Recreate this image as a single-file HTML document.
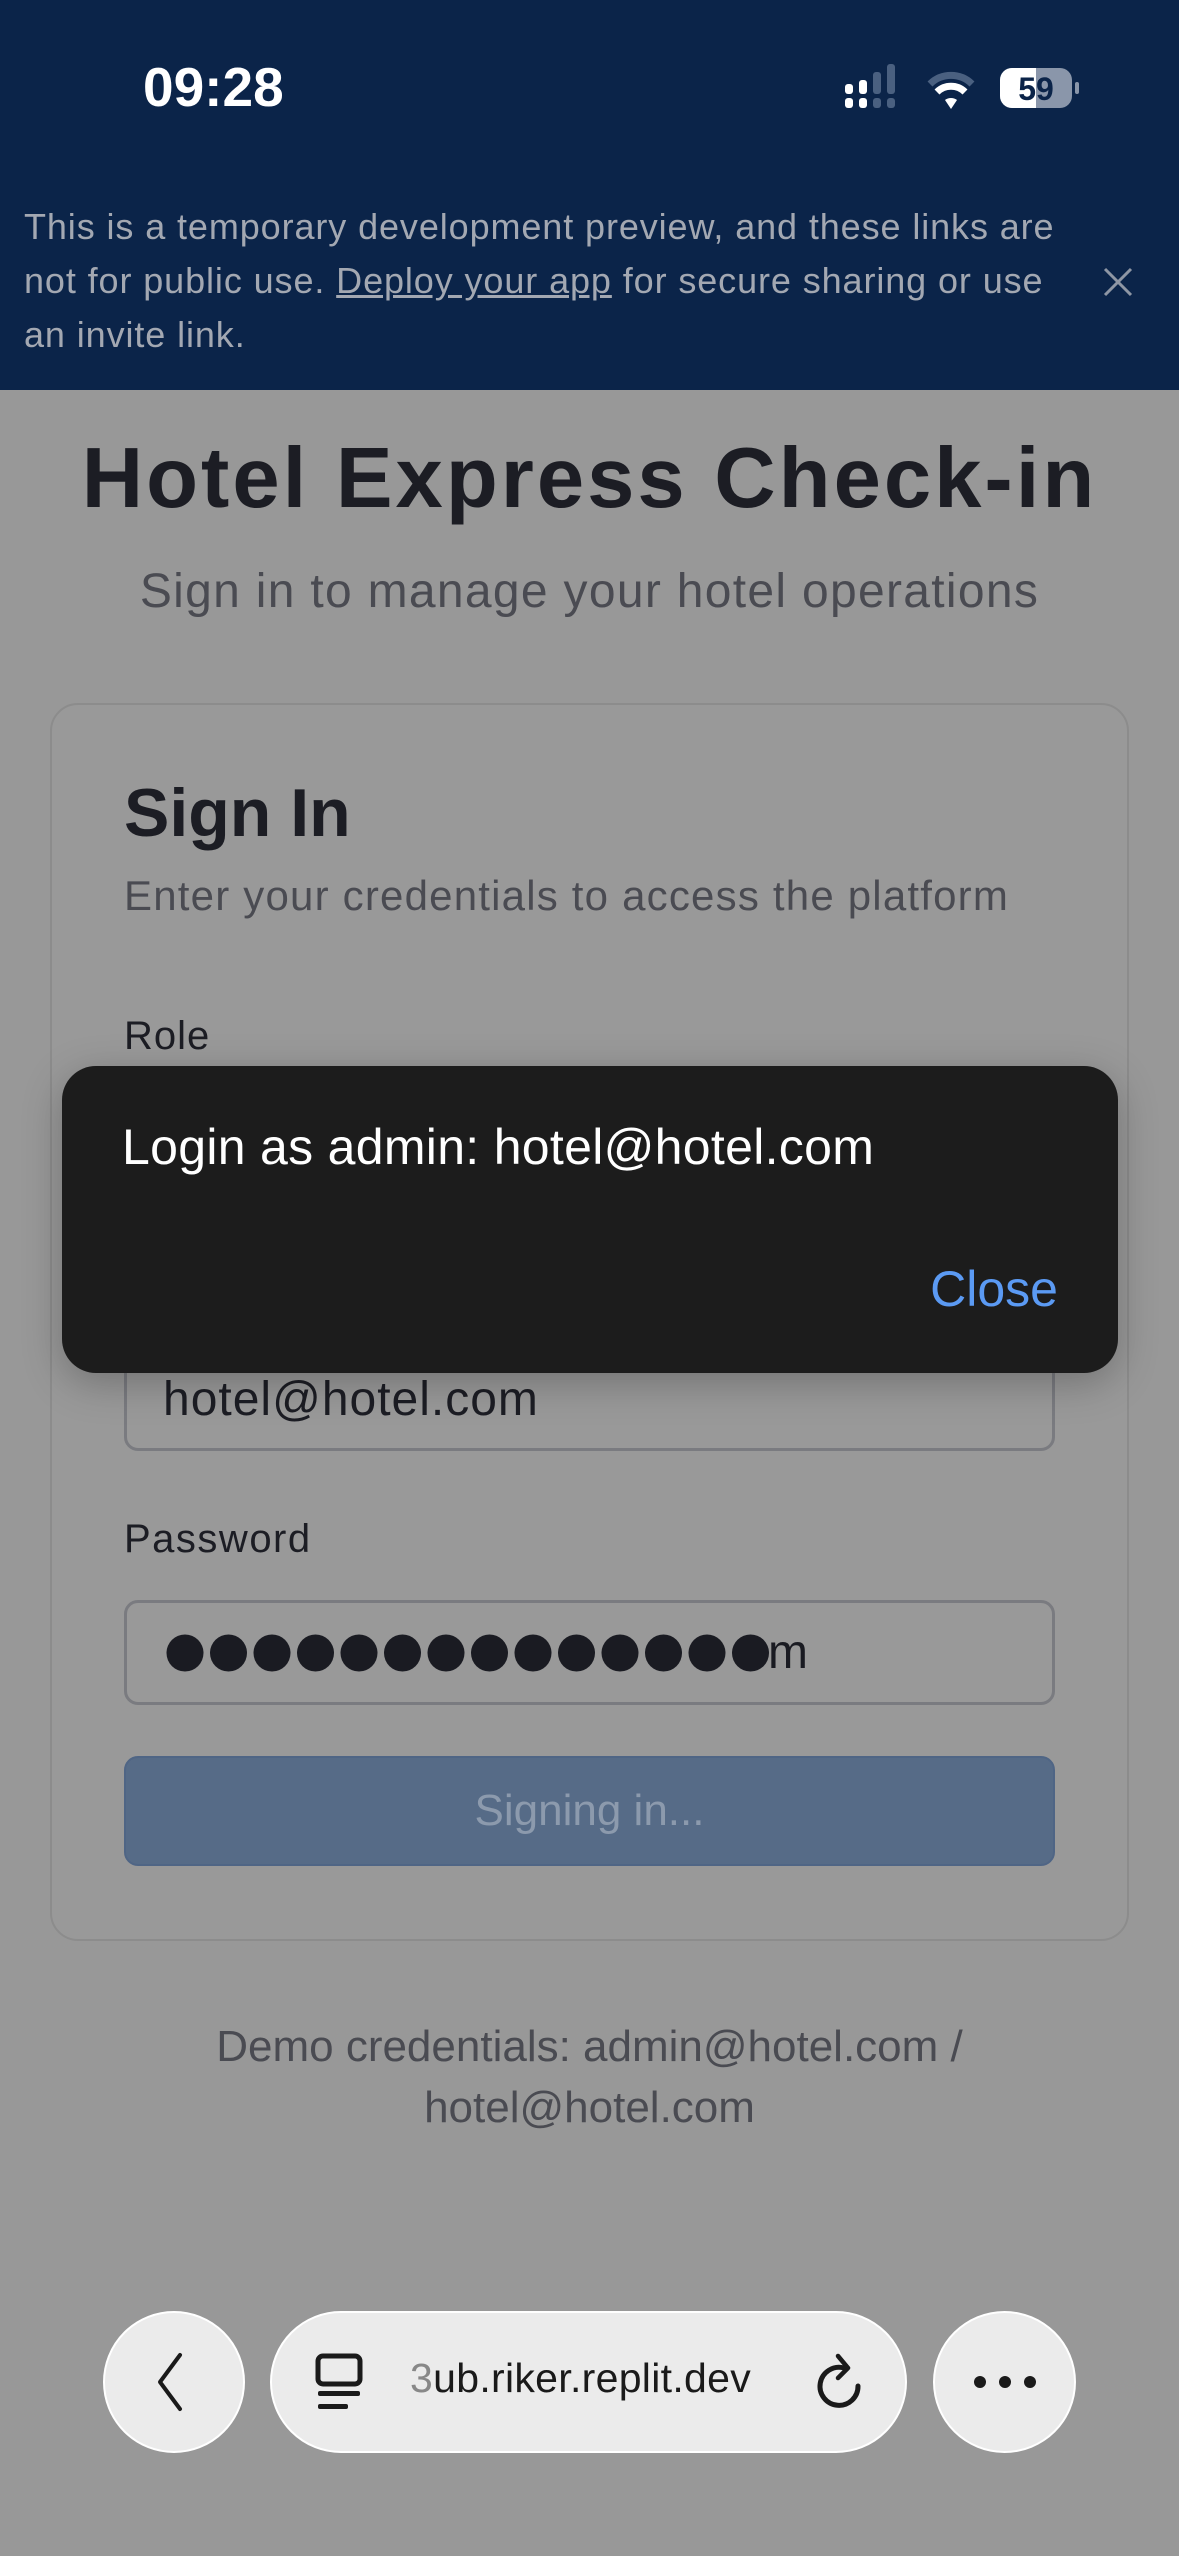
<!DOCTYPE html>
<html><head><meta charset="utf-8"><style>
*{margin:0;padding:0;box-sizing:border-box}
body{width:1179px;height:2556px;background:#989898;font-family:"Liberation Sans",sans-serif;position:relative;overflow:hidden}
.a{position:absolute;white-space:nowrap}
</style></head><body>
<div class="a" style="left:0;top:0;width:1179px;height:390px;background:#0b2449"></div>
<div class="a" style="left:143px;top:55px;font-size:55px;font-weight:bold;color:#fff">09:28</div>
<svg class="a" style="left:840px;top:60px" width="250" height="56" viewBox="0 0 250 56">
<rect x="5" y="24" width="8" height="10" rx="3" fill="#fff"/><rect x="5" y="38" width="8" height="10" rx="3" fill="#fff"/>
<rect x="19" y="20" width="8" height="14" rx="3" fill="#fff"/><rect x="19" y="38" width="8" height="10" rx="3" fill="#fff"/>
<rect x="33" y="12" width="8" height="22" rx="3" fill="#4a6080"/><rect x="33" y="38" width="8" height="10" rx="3" fill="#4a6080"/>
<rect x="47" y="4" width="8" height="30" rx="3" fill="#4a6080"/><rect x="47" y="38" width="8" height="10" rx="3" fill="#4a6080"/>
<path d="M90 24a30 30 0 0 1 42 0" stroke="#4a6080" stroke-width="7" fill="none"/>
<path d="M97 32a20 20 0 0 1 28 0" stroke="#fff" stroke-width="7" fill="none"/>
<path d="M105 40l6 9l6-9a10 10 0 0 0-12 0z" fill="#fff"/>
<rect x="160" y="8" width="72" height="40" rx="12" fill="#8a96aa"/>
<path d="M172 8h24v40h-24a12 12 0 0 1-12-12v-16a12 12 0 0 1 12-12z" fill="#fff"/>
<rect x="235" y="22" width="4" height="12" rx="2" fill="#8a96aa"/>
<text x="196" y="40" font-size="32" font-weight="bold" text-anchor="middle" fill="#0b2449" font-family="Liberation Sans">59</text>
</svg>
<div class="a" style="left:24px;top:200px;font-size:36px;letter-spacing:0.9px;line-height:54px;color:#a3a8b2">This is a temporary development preview, and these links are<br>not for public use. <u>Deploy your app</u> for secure sharing or use<br>an invite link.</div>
<svg class="a" style="left:1102px;top:266px" width="32" height="32"><path d="M3 3L29 29M29 3L3 29" stroke="#8e96a4" stroke-width="3"/></svg>

<div class="a" style="left:0;width:1179px;top:430px;text-align:center;font-size:85px;letter-spacing:3px;font-weight:bold;color:#1c1d24">Hotel Express Check-in</div>
<div class="a" style="left:0;width:1179px;top:564px;text-align:center;font-size:48px;letter-spacing:1.3px;color:#4a4b52">Sign in to manage your hotel operations</div>

<div class="a" style="left:50px;top:703px;width:1079px;height:1238px;border:2px solid #8c8c8c;border-radius:28px;background:#999"></div>
<div class="a" style="left:124px;top:774px;font-size:68px;font-weight:bold;color:#1c1d24">Sign In</div>
<div class="a" style="left:124px;top:872px;font-size:42px;letter-spacing:1.2px;color:#4a4b52">Enter your credentials to access the platform</div>
<div class="a" style="left:124px;top:1014px;font-size:40px;letter-spacing:1px;color:#1c1d24">Role</div>
<div class="a" style="left:124px;top:1346px;width:931px;height:105px;border:3px solid #7a7b80;border-radius:14px"></div>
<div class="a" style="left:163px;top:1372px;font-size:48px;letter-spacing:1px;color:#1c1d24">hotel@hotel.com</div>
<div class="a" style="left:124px;top:1517px;font-size:40px;letter-spacing:1.5px;color:#1c1d24">Password</div>
<div class="a" style="left:124px;top:1600px;width:931px;height:105px;border:3px solid #7a7b80;border-radius:14px"></div>
<svg class="a" style="left:160px;top:1630px" width="620" height="46">
<g fill="#1a1b22">
<circle cx="25" cy="23" r="18.5"/><circle cx="68.5" cy="23" r="18.5"/><circle cx="112" cy="23" r="18.5"/><circle cx="155.5" cy="23" r="18.5"/><circle cx="199" cy="23" r="18.5"/><circle cx="242.5" cy="23" r="18.5"/><circle cx="286" cy="23" r="18.5"/><circle cx="329.5" cy="23" r="18.5"/><circle cx="373" cy="23" r="18.5"/><circle cx="416.5" cy="23" r="18.5"/><circle cx="460" cy="23" r="18.5"/><circle cx="503.5" cy="23" r="18.5"/><circle cx="547" cy="23" r="18.5"/><circle cx="590.5" cy="23" r="18.5"/></g></svg>
<div class="a" style="left:768px;top:1625px;font-size:48px;color:#1a1b22">m</div>
<div class="a" style="left:124px;top:1756px;width:931px;height:110px;background:#566b87;border-radius:14px;border:2px solid #4f6585"></div>
<div class="a" style="left:124px;width:931px;top:1786px;text-align:center;font-size:44px;color:#8c9aad">Signing in...</div>

<div class="a" style="left:0;width:1179px;top:2016px;text-align:center;font-size:44px;line-height:61px;color:#4a4b52">Demo credentials: admin@hotel.com /<br>hotel@hotel.com</div>

<div class="a" style="left:62px;top:1066px;width:1056px;height:307px;background:#1c1c1c;border-radius:34px;box-shadow:0 10px 40px rgba(0,0,0,.25)"></div>
<div class="a" style="left:122px;top:1118px;font-size:50px;letter-spacing:0.3px;color:#fff">Login as admin: hotel@hotel.com</div>
<div class="a" style="right:121px;top:1260px;font-size:50px;color:#5b9af3">Close</div>

<div class="a" style="left:103px;top:2311px;width:142px;height:142px;border-radius:50%;background:#ebebeb;border:2px solid #fff"></div>
<svg class="a" style="left:150px;top:2350px" width="40" height="64"><path d="M30 5L10 32L30 59" stroke="#1a1a1a" stroke-width="4" fill="none" stroke-linecap="round" stroke-linejoin="round"/></svg>
<div class="a" style="left:270px;top:2311px;width:637px;height:142px;border-radius:71px;background:#ebebeb;border:2px solid #fff"></div>
<svg class="a" style="left:315px;top:2353px" width="50" height="60"><rect x="3" y="3" width="42" height="28" rx="5" stroke="#1a1a1a" stroke-width="5" fill="none"/><rect x="3" y="38" width="42" height="5" rx="2" fill="#1a1a1a"/><rect x="3" y="51" width="30" height="5" rx="2" fill="#1a1a1a"/></svg>
<div class="a" style="left:410px;top:2355px;font-size:41px;letter-spacing:0.3px;color:#1a1a1a"><span style="color:#888">3</span>ub.riker.replit.dev</div>
<svg class="a" style="left:812px;top:2350px" width="56" height="66"><path d="M32 18A19 19 0 1 0 46 36" stroke="#1a1a1a" stroke-width="5" fill="none" stroke-linecap="round"/><path d="M26 6L36 18L26 28" stroke="#1a1a1a" stroke-width="4.5" fill="none" stroke-linecap="round" stroke-linejoin="round"/></svg>
<div class="a" style="left:933px;top:2311px;width:143px;height:142px;border-radius:50%;background:#ebebeb;border:2px solid #fff"></div>
<svg class="a" style="left:970px;top:2370px" width="70" height="24"><circle cx="10" cy="12" r="6" fill="#1a1a1a"/><circle cx="35" cy="12" r="6" fill="#1a1a1a"/><circle cx="60" cy="12" r="6" fill="#1a1a1a"/></svg>
</body></html>
